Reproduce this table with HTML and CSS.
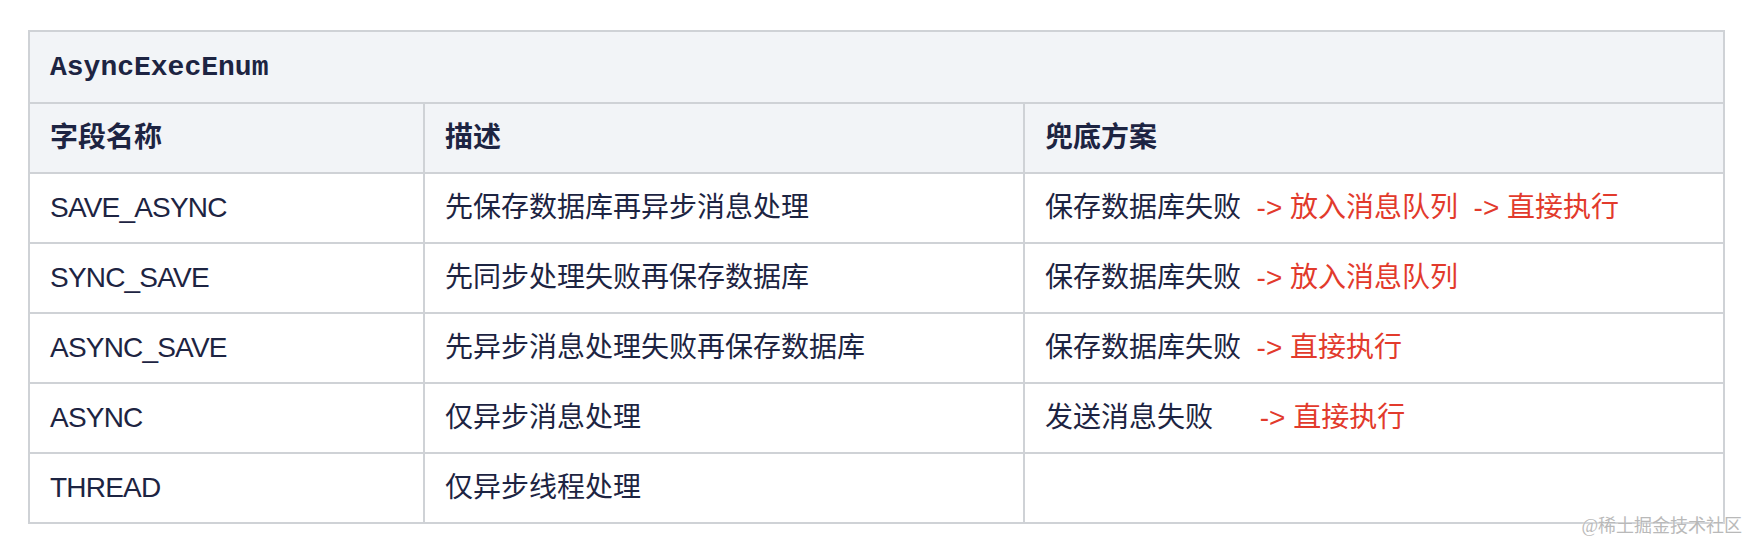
FILE: index.html
```html
<!DOCTYPE html>
<html lang="zh-CN">
<head>
<meta charset="utf-8">
<title>AsyncExecEnum</title>
<link rel="stylesheet" href="styles.css">
</head>
<body>
<div class="page">
  <table class="enum-table">
    <colgroup>
      <col class="c1">
      <col class="c2">
      <col class="c3">
    </colgroup>
    <thead>
      <tr class="title-row">
        <th colspan="3"><code class="enum-name">AsyncExecEnum</code></th>
      </tr>
      <tr class="head-row">
        <th>字段名称</th>
        <th>描述</th>
        <th>兜底方案</th>
      </tr>
    </thead>
    <tbody>
      <tr>
        <td><span class="name">SAVE_ASYNC</span></td>
        <td>先保存数据库再异步消息处理</td>
        <td>保存数据库失败&nbsp;&nbsp;<span class="red">-&gt; 放入消息队列</span>&nbsp;&nbsp;<span class="red">-&gt; 直接执行</span></td>
      </tr>
      <tr>
        <td><span class="name">SYNC_SAVE</span></td>
        <td>先同步处理失败再保存数据库</td>
        <td>保存数据库失败&nbsp;&nbsp;<span class="red">-&gt; 放入消息队列</span></td>
      </tr>
      <tr>
        <td><span class="name">ASYNC_SAVE</span></td>
        <td>先异步消息处理失败再保存数据库</td>
        <td>保存数据库失败&nbsp;&nbsp;<span class="red">-&gt; 直接执行</span></td>
      </tr>
      <tr>
        <td><span class="name">ASYNC</span></td>
        <td>仅异步消息处理</td>
        <td>发送消息失败&nbsp;&nbsp;&nbsp;&nbsp;&nbsp;&nbsp;<span class="red">-&gt; 直接执行</span></td>
      </tr>
      <tr>
        <td><span class="name">THREAD</span></td>
        <td>仅异步线程处理</td>
        <td></td>
      </tr>
    </tbody>
  </table>
  <div class="watermark">@稀土掘金技术社区</div>
</div>
</body>
</html>
```

FILE: styles.css
```css
html, body {
  margin: 0;
  padding: 0;
  background: #ffffff;
}

.page {
  position: relative;
  width: 1750px;
  height: 542px;
  box-sizing: border-box;
  padding: 30px 0 0 28px;
  font-family: "Liberation Sans", "Noto Sans CJK SC", sans-serif;
  color: #1d2442;
}

.enum-table {
  width: 1695px;
  table-layout: fixed;
  border-collapse: collapse;
  font-size: 28px;
}

.c1 { width: 395px; }
.c2 { width: 600px; }
.c3 { width: 700px; }

.enum-table th,
.enum-table td {
  border: 2px solid #cfd2d6;
  padding: 14px 20px;
  line-height: 40px;
  text-align: left;
  vertical-align: middle;
  white-space: nowrap;
}

.enum-table th {
  background: #f2f4f7;
  font-weight: 700;
}

.enum-table td {
  background: #ffffff;
  font-weight: 400;
}

.enum-name {
  font-family: "Liberation Mono", "DejaVu Sans Mono", monospace;
  font-weight: 700;
  font-size: 28px;
  color: #1d2442;
}

.name {
  letter-spacing: -0.8px;
}

.red {
  color: #e23a2c;
}

.watermark {
  position: absolute;
  right: 8px;
  bottom: 5px;
  font-family: "Liberation Serif", "Noto Sans CJK SC", serif;
  font-size: 18px;
  line-height: 22px;
  color: #b9b9b9;
  text-shadow: 0 0 2px #ffffff;
}
```
